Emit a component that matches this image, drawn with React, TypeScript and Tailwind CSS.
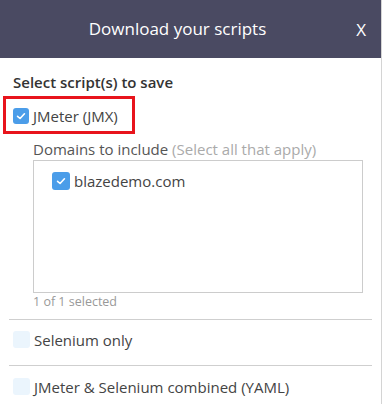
const CheckIcon = () => (
  <svg viewBox="0 0 16 16" className="w-[10px] h-[10px]" fill="none">
    <path d="M2.5 8.5 L6.5 12 L13.5 4.5" stroke="white" strokeWidth="2.6" strokeLinecap="round" strokeLinejoin="round" />
  </svg>
);

function Box({ checked, size = "w-[16px] h-[16px]" }: { checked: boolean; size?: string }) {
  return (
    <span
      className={
        checked
          ? `${size} rounded-[3px] bg-[#4b9de9] flex items-center justify-center shrink-0`
          : `${size} rounded-[3px] bg-[#ebf5fd] shrink-0`
      }
    >
      {checked && <CheckIcon />}
    </span>
  );
}

export default function App() {
  return (
    <div
      className="w-[382px] h-[404px] bg-white border-r border-[#d4d4d4] overflow-hidden flex flex-col"
      style={{ fontFamily: '"Open Sans", sans-serif' }}
    >
      {/* Header */}
      <div className="h-[58px] bg-[#4a4a62] flex items-center relative shrink-0">
        <div className="flex-1 text-center text-white text-[17px] pr-[26px]">Download your scripts</div>
        <span className="absolute right-[15px] top-[17px] text-white text-[17px]">X</span>
      </div>

      <div className="flex flex-col pt-[14px]">
        <div className="pl-[13px] text-[15px] font-semibold text-[#333] leading-[20px]">Select script(s) to save</div>

        <div className="ml-[3px] mt-[4px] w-[132px] h-[38px] border-[3px] border-[#e8141c] flex items-center gap-[4px] pl-[7px] pt-[2px]">
          <Box checked />
          <span className="text-[15px] text-[#444] leading-[20px]">JMeter (JMX)</span>
        </div>

        <div className="pl-[33px] mt-[5px] text-[15px] leading-[20px] text-[#555]">
          Domains to include <span className="text-[#aaa]">(Select all that apply)</span>
        </div>

        <div className="ml-[33px] w-[330px] h-[133px] border border-[#cccccc] mt-[1px] pt-[10px] pl-[18px]">
          <div className="flex items-center gap-[4px]">
            <Box checked size="w-[18px] h-[18px]" />
            <span className="text-[15px] text-[#444] leading-[20px]">blazedemo.com</span>
          </div>
        </div>
        <div className="pl-[33px] text-[12.5px] text-[#999] leading-[16px] mt-[1px]">1 of 1 selected</div>

        <div className="mx-[9px] mt-[9px] border-t border-[#cfcfcf]"></div>
        <div className="pl-[13px] h-[45px] flex items-start pt-[11px] gap-[4px]">
          <Box checked={false} size="w-[17px] h-[17px]" />
          <span className="text-[15px] text-[#444] leading-[18px]">Selenium only</span>
        </div>
        <div className="mx-[9px] border-t border-[#cfcfcf]"></div>
        <div className="pl-[13px] h-[45px] flex items-start pt-[12px] gap-[4px]">
          <Box checked={false} size="w-[17px] h-[17px]" />
          <span className="text-[15px] text-[#444] leading-[18px]">JMeter &amp; Selenium combined (YAML)</span>
        </div>
      </div>
    </div>
  );
}
